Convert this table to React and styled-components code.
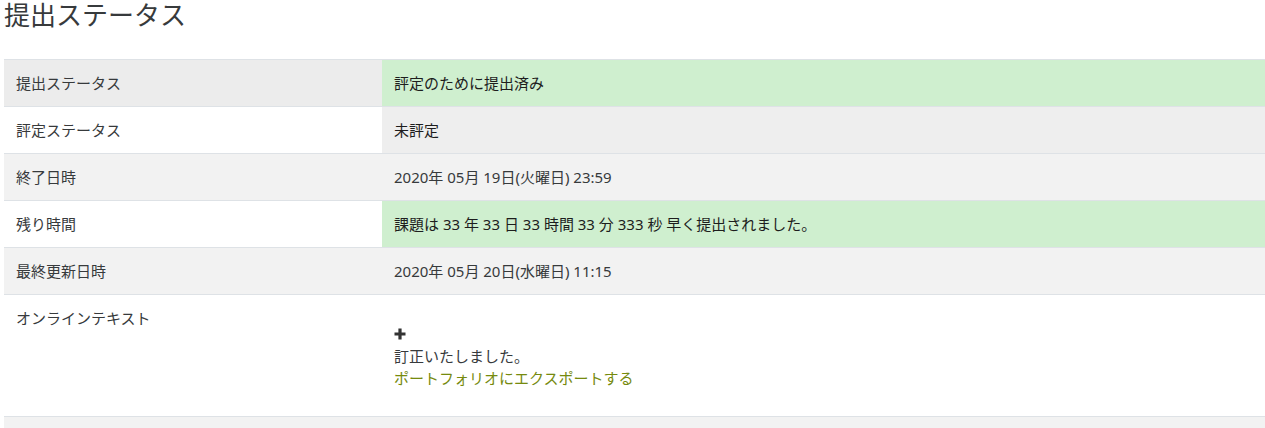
import styled, { createGlobalStyle } from "styled-components";

const GlobalStyle = createGlobalStyle`
  body {
    margin: 0;
    background: #fff;
    overflow: hidden;
    font-family: "Noto Sans", "Noto Sans CJK JP", sans-serif;
    color: #373a3c;
  }
`;

const Page = styled.div`
  padding-left: 4px;
`;

const Title = styled.h3`
  margin: 0;
  font-size: 26px;
  font-weight: 400;
  line-height: 1.2;
  color: #373a3c;
`;

const Table = styled.div`
  margin-top: 28px;
  width: 1261px;
  font-size: 15px;
  line-height: 22px;
`;

const Row = styled.div`
  display: grid;
  grid-template-columns: 378px 1fr;
  border-top: 1px solid #dee2e6;
  background: ${(p) => (p.$striped ? "#f2f2f2" : "#fff")};
`;

const Label = styled.div`
  padding: 12px;
  background: ${(p) => p.$bg || "transparent"};
`;

const Value = styled.div`
  padding: 12px;
  background: ${(p) =>
    p.$status === "ok" ? "#cfefcf" : p.$status === "grey" ? "#eeeeee" : "transparent"};
  color: ${(p) => (p.$status ? "#1d1d1d" : "#373a3c")};
`;

const OnlineText = styled.div`
  padding-top: 16px;
  padding-bottom: 15px;
`;

const PlusLine = styled.div`
  height: 22px;
  display: flex;
  align-items: center;
  color: #333;
`;

const ExportLink = styled.a`
  color: #768a0e;
  text-decoration: none;
`;

const Empty = styled.div`
  height: 22px;
`;

const PlusIcon = () => (
  <svg width="12" height="12" viewBox="0 0 12 12">
    <path d="M6 0.5v11M0.5 6h11" stroke="currentColor" strokeWidth="3.2" />
  </svg>
);

export default function App() {
  return (
    <Page>
      <GlobalStyle />
      <Title>提出ステータス</Title>
      <Table>
        <Row $striped>
          <Label $bg="#ececec">提出ステータス</Label>
          <Value $status="ok">評定のために提出済み</Value>
        </Row>
        <Row>
          <Label>評定ステータス</Label>
          <Value $status="grey">未評定</Value>
        </Row>
        <Row $striped>
          <Label>終了日時</Label>
          <Value>2020年 05月 19日(火曜日) 23:59</Value>
        </Row>
        <Row>
          <Label>残り時間</Label>
          <Value $status="ok">課題は 33 年 33 日 33 時間 33 分 333 秒 早く提出されました。</Value>
        </Row>
        <Row $striped>
          <Label>最終更新日時</Label>
          <Value>2020年 05月 20日(水曜日) 11:15</Value>
        </Row>
        <Row>
          <Label>オンラインテキスト</Label>
          <Value>
            <OnlineText>
              <PlusLine>
                <PlusIcon />
              </PlusLine>
              <div>訂正いたしました。</div>
              <ExportLink href="#">ポートフォリオにエクスポートする</ExportLink>
            </OnlineText>
          </Value>
        </Row>
        <Row $striped>
          <Label>
            <Empty />
          </Label>
          <Value />
        </Row>
      </Table>
    </Page>
  );
}
